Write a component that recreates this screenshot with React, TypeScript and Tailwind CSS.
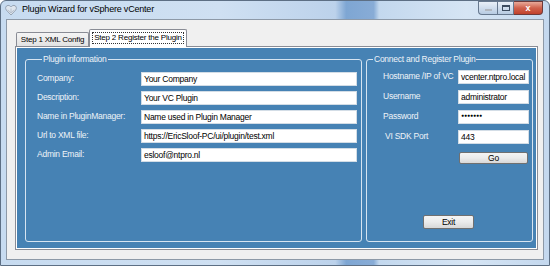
import React from "react";

const FONT = "font-['Liberation_Sans',Arial,sans-serif]";

function TextBox({ value, w, small }: { value: string; w: string; small?: boolean }) {
  return (
    <div
      className={`${w} h-[14px] shrink-0 bg-white border border-[#d3dde6] pl-[2px] flex items-center text-black leading-none whitespace-nowrap overflow-hidden`}
    >
      {small ? <span className="text-[5px] tracking-[0px] pb-[3px]">{value}</span> : value}
    </div>
  );
}

function Button({ label, w, h }: { label: string; w: string; h: string }) {
  return (
    <div
      className={`${w} ${h} rounded-[2px] border border-[#707070] bg-gradient-to-b from-[#f4f4f4] via-[#ebebeb] to-[#d8d8d8] flex items-center justify-center text-black leading-none`}
    >
      {label}
    </div>
  );
}

const infoRows = [
  ["Company:", "Your Company"],
  ["Description:", "Your VC Plugin"],
  ["Name in PluginManager:", "Name used in Plugin Manager"],
  ["Url to XML file:", "https://EricSloof-PC/ui/plugin/test.xml"],
  ["Admin Email:", "esloof@ntpro.nl"],
];

const connectRows = [
  ["Hostname /IP of VC", "vcenter.ntpro.local", ""],
  ["Username", "administrator", ""],
  ["Password", "●●●●●●●", ""],
  ["VI SDK Port", "443", "pl-[2px]"],
];

export default function App() {
  return (
    <div
      className={`${FONT} w-[550px] h-[266px] flex flex-col overflow-hidden rounded-t-[6px] border border-[#5d6f84] bg-[linear-gradient(90deg,#c7dbf0_0%,#cfe0f2_40%,#bcd2eb_61%,#7ea6d3_63%,#88acd6_68%,#c3d8ee_69%,#d6e5f4_85%,#c4d8ee_100%)] text-[8.5px] tracking-[-0.25px]`}
    >
      {/* Title bar */}
      <div className="h-[18px] flex items-start shrink-0">
        <div className="flex items-center h-[18px] pl-[4px] gap-[5px]">
          <svg width="12" height="12" viewBox="0 0 12 12">
            <path
              d="M6 11 L1.3 6 C0 4.4 0.6 1.6 3 1.4 C4.4 1.3 5.4 2.2 6 3 C6.6 2.2 7.6 1.3 9 1.4 C11.4 1.6 12 4.4 10.7 6 Z"
              fill="#dfe6ee"
              stroke="#8e9cad"
              strokeWidth="0.9"
            />
            <path d="M6 9 L3 5.8 M6 9 L9 5.8 M6 4.5 L6 8" stroke="#a9b5c3" strokeWidth="0.8" fill="none" />
          </svg>
          <span className="text-[9px] tracking-[-0.2px] text-black">
            Plugin Wizard for vSphere vCenter
          </span>
        </div>
        <div className="ml-auto mr-[6px] flex">
          <div className="w-[19px] h-[14px] rounded-bl-[4px] border border-[#66788e] border-r-0 bg-gradient-to-b from-[#e9f0f8] to-[#b7cbe2] flex items-center justify-center pt-[3px]">
            <div className="w-[7px] h-[2px] bg-[#3c4c60] border border-white/60" />
          </div>
          <div className="w-[17px] h-[14px] border border-[#66788e] bg-gradient-to-b from-[#e9f0f8] to-[#b7cbe2] flex items-center justify-center">
            <div className="w-[8px] h-[6px] border border-[#3c4c60] border-t-2" />
          </div>
          <div className="w-[29px] h-[14px] rounded-br-[4px] border border-[#6e3a3a] border-l-0 bg-gradient-to-b from-[#e7a99a] via-[#d0614c] to-[#c0412c] flex items-center justify-center text-white font-bold text-[9px] leading-none">
            x
          </div>
        </div>
      </div>

      {/* Frame + client area */}
      <div className="flex shrink-0">
        <div className="w-[5px] shrink-0" />
        <div className="w-[538px] h-[241px] shrink-0 border border-[#8d99a7] bg-[#f0f0f0] pl-[8px] pr-[5px] pt-[9px]">
          {/* Tabs */}
          <div className="flex items-end h-[17px] relative z-10">
            <div className="ml-[1px] w-[73px] h-[14px] border border-b-0 border-[#898c95] rounded-t-[2px] bg-gradient-to-b from-[#f5f5f5] to-[#e2e2e2] text-[8px] tracking-[-0.2px] text-black flex items-center justify-center leading-none">
              Step 1 XML Config
            </div>
            <div className="w-[98px] h-[18px] -mb-[1px] border border-b-0 border-[#898c95] rounded-t-[2px] bg-white text-[8px] tracking-[-0.2px] text-black flex items-start justify-center pt-[2px] leading-none">
              <span className="border border-dotted border-[#333] px-[1px] py-[1px]">
                Step 2 Register the Plugin
              </span>
            </div>
          </div>

          {/* Tab page */}
          <div className="h-[204px] border border-[#898c95] bg-white p-[1px]">
            <div className="h-full bg-[#4682b4] flex gap-[4px] pl-[8px] pr-[2px] pt-[5px] pb-[6px]">
              {/* Plugin information */}
              <fieldset className="w-[337px] h-full border border-[#d6e4f1] rounded-[3px] pl-[11px] pr-[4px]">
                <legend className="ml-[5px] px-[1px] leading-[13px] text-[#eef3f8]">
                  Plugin information
                </legend>
                <div className="flex flex-col gap-[5px] pt-[6px]">
                  {infoRows.map(([label, value]) => (
                    <div key={label} className="flex items-center h-[14px]">
                      <span className="w-[104px] shrink-0 pb-[2px] text-[#eef3f8] whitespace-nowrap">
                        {label}
                      </span>
                      <TextBox value={value} w="w-[216px]" />
                    </div>
                  ))}
                </div>
              </fieldset>

              {/* Connect and Register Plugin */}
              <fieldset className="w-[167px] h-full border border-[#d6e4f1] rounded-[3px] pl-[16px] pr-[3px]">
                <legend className="ml-[-10px] px-[1px] leading-[13px] text-[#eef3f8]">
                  Connect and Register Plugin
                </legend>
                <div className="flex flex-col gap-[6px] pt-[4px]">
                  {connectRows.map(([label, value, pad]) => (
                    <div key={label} className="flex items-center h-[14px]">
                      <span className={`w-[75px] shrink-0 pb-[2px] text-[#eef3f8] whitespace-nowrap ${pad}`}>
                        {label}
                      </span>
                      <TextBox value={value} w="w-[71px]" small={label === "Password"} />
                    </div>
                  ))}
                </div>
                <div className="ml-[76px] mt-[8px]">
                  <Button label="Go" w="w-[69px]" h="h-[12px]" />
                </div>
                <div className="ml-[40px] mt-[51px]">
                  <Button label="Exit" w="w-[51px]" h="h-[14px]" />
                </div>
              </fieldset>
            </div>
          </div>
        </div>
      </div>
    </div>
  );
}
